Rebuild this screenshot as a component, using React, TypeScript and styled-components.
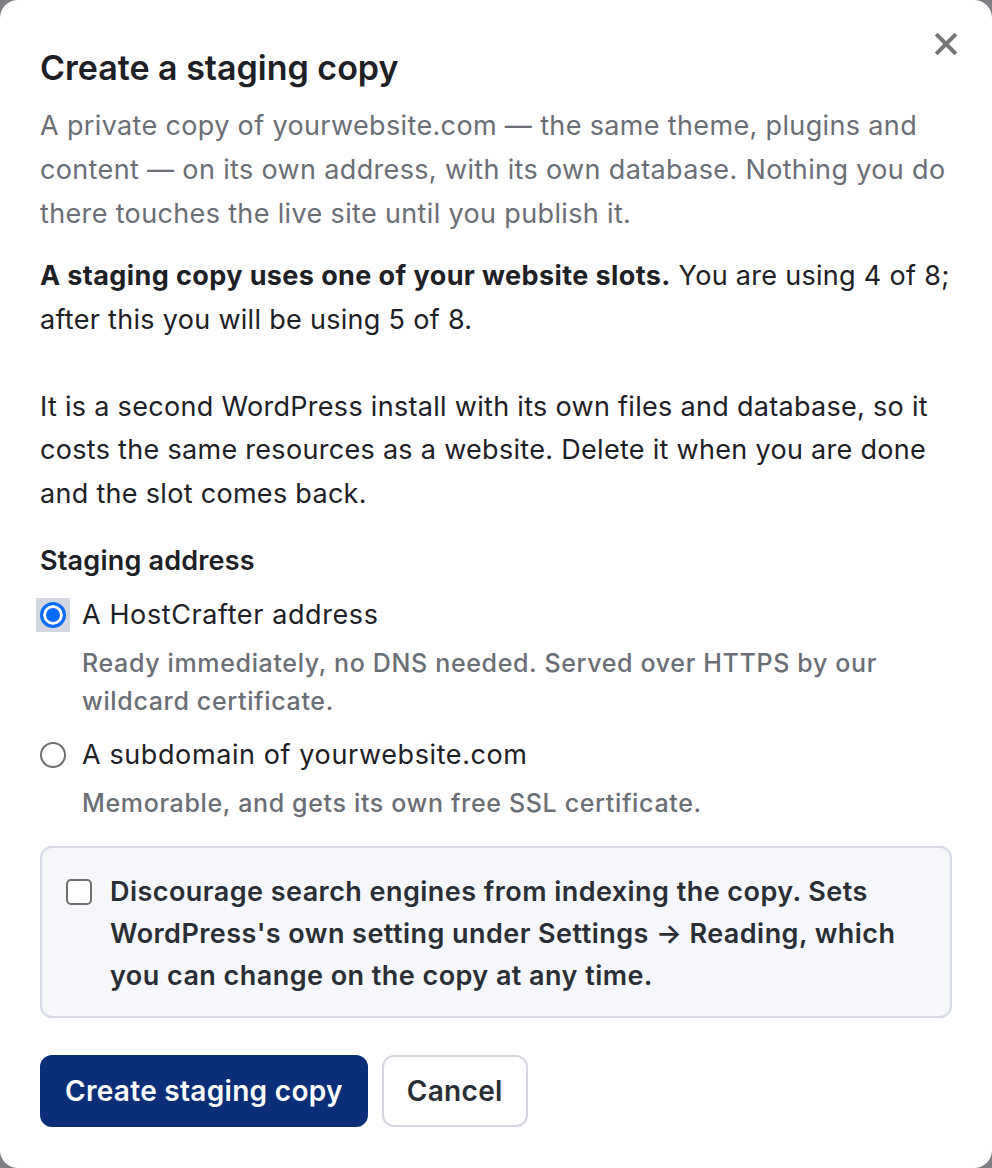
import React, { useState } from "react";
import styled, { createGlobalStyle } from "styled-components";

const Global = createGlobalStyle`
  html, body { margin: 0; padding: 0; background: #7f8084; }
  body { font-family: Inter, "Noto Sans", "Liberation Sans", sans-serif; -webkit-font-smoothing: antialiased; }
  * { box-sizing: border-box; }
`;

const Dialog = styled.div`
  position: relative;
  width: 992px;
  min-height: 1168px;
  background: #ffffff;
  border-radius: 18px;
  padding: 44px 40px 40px 40px;
  display: flex;
  flex-direction: column;
  color: #1d2025;
`;

const CloseButton = styled.button`
  position: absolute;
  top: 28px;
  right: 30px;
  width: 32px;
  height: 32px;
  border: none;
  background: transparent;
  padding: 0;
  display: flex;
  align-items: center;
  justify-content: center;
  cursor: pointer;
`;

const Title = styled.h2`
  margin: 0 0 12px 0;
  font-size: 34px;
  line-height: 48px;
  font-weight: 600;
  color: #1d2025;
  letter-spacing: 0;
`;

const Lead = styled.p`
  margin: 0;
  font-size: 27px;
  line-height: 44px;
  letter-spacing: 0.35px;
  color: #6a6e75;
`;

const Body = styled.p`
  margin: 18px 0 0 0;
  font-size: 27px;
  line-height: 43.5px;
  letter-spacing: 0.3px;
  color: #1d2025;
  strong { font-weight: 700; letter-spacing: 0.4px; }
`;

const Fieldset = styled.fieldset`
  border: none;
  margin: 24px 0 0 0;
  padding: 0;
  display: flex;
  flex-direction: column;
`;

const Legend = styled.legend`
  padding: 0;
  font-size: 27px;
  line-height: 44px;
  font-weight: 600;
  letter-spacing: 0.2px;
  color: #1d2025;
`;

const Option = styled.label<{ first?: boolean }>`
  display: grid;
  grid-template-columns: 42px 1fr;
  margin-top: ${(p) => (p.first ? "12px" : "15px")};
  cursor: pointer;
`;

const RadioWrap = styled.span<{ focused?: boolean }>`
  width: 34px;
  height: 34px;
  margin-left: -4px;
  display: flex;
  align-items: center;
  justify-content: center;
  background: ${(p) => (p.focused ? "#d3d7df" : "transparent")};
  align-self: start;
  margin-top: 3px;
`;

const RadioDot = styled.span<{ checked?: boolean }>`
  width: 26px;
  height: 26px;
  border-radius: 50%;
  border: ${(p) => (p.checked ? "3px solid #0a6cff" : "2px solid #6f6f6f")};
  background: ${(p) => (p.checked ? "#0a6cff" : "#fff")};
  box-shadow: ${(p) => (p.checked ? "inset 0 0 0 3px #fff" : "none")};
`;

const OptionLabel = styled.span`
  font-size: 27px;
  line-height: 40px;
  letter-spacing: 0.6px;
  color: #1d2025;
`;

const OptionHint = styled.span`
  grid-column: 2;
  margin-top: 9px;
  font-size: 25px;
  line-height: 38px;
  font-weight: 500;
  letter-spacing: 0.65px;
  color: #6a6e75;
`;

const Notice = styled.label`
  margin-top: 24px;
  background: #f5f7fa;
  border: 2px solid #d6dbe6;
  border-radius: 12px;
  padding: 23px 24px 19px 24px;
  display: grid;
  grid-template-columns: 44px 1fr;
  cursor: pointer;
`;

const CheckBox = styled.span`
  width: 26px;
  height: 26px;
  border: 2px solid #6f6f6f;
  border-radius: 5px;
  background: #fff;
  margin-top: 8px;
`;

const NoticeText = styled.span`
  font-size: 27px;
  line-height: 42px;
  font-weight: 600;
  letter-spacing: 0.45px;
  color: #2a2e35;
`;

const Actions = styled.div`
  margin-top: 37px;
  display: flex;
  gap: 14px;
`;

const Button = styled.button<{ primary?: boolean }>`
  height: 72px;
  padding: 0 23px;
  border-radius: 12px;
  font-family: inherit;
  font-size: 28px;
  font-weight: 600;
  letter-spacing: 0.3px;
  cursor: pointer;
  background: ${(p) => (p.primary ? "#0a2f78" : "#ffffff")};
  color: ${(p) => (p.primary ? "#ffffff" : "#2a2e35")};
  border: 2px solid ${(p) => (p.primary ? "#0a2f78" : "#d3d7df")};
`;

export default function App() {
  const [choice, setChoice] = useState<"host" | "sub">("host");
  const [discourage, setDiscourage] = useState(false);
  return (
    <>
      <Global />
      <Dialog role="dialog" aria-labelledby="staging-title">
        <CloseButton aria-label="Close">
          <svg width="22" height="22" viewBox="0 0 22 22">
            <path d="M2.5 2.5 L19.5 19.5 M19.5 2.5 L2.5 19.5" stroke="#777" strokeWidth="4" strokeLinecap="square" />
          </svg>
        </CloseButton>
        <Title id="staging-title">Create a staging copy</Title>
        <Lead>
          A private copy of yourwebsite.com — the same theme, plugins and content — on its own address, with its own
          database. Nothing you do there touches the live site until you publish it.
        </Lead>
        <Body>
          <strong>A staging copy uses one of your website slots.</strong> You are using 4 of 8; after this you will be
          using 5 of 8.
          <br />
          <br />
          It is a second WordPress install with its own files and database, so it costs the same resources as a
          website. Delete it when you are done and the slot comes back.
        </Body>
        <Fieldset>
          <Legend>Staging address</Legend>
          <Option first onClick={() => setChoice("host")}>
            <RadioWrap focused={choice === "host"}>
              <RadioDot checked={choice === "host"} />
            </RadioWrap>
            <OptionLabel>A HostCrafter address</OptionLabel>
            <OptionHint>Ready immediately, no DNS needed. Served over HTTPS by our wildcard certificate.</OptionHint>
          </Option>
          <Option onClick={() => setChoice("sub")}>
            <RadioWrap focused={choice === "sub"}>
              <RadioDot checked={choice === "sub"} />
            </RadioWrap>
            <OptionLabel>A subdomain of yourwebsite.com</OptionLabel>
            <OptionHint>Memorable, and gets its own free SSL certificate.</OptionHint>
          </Option>
        </Fieldset>
        <Notice onClick={() => setDiscourage(!discourage)}>
          <CheckBox />
          <NoticeText>
            Discourage search engines from indexing the copy. Sets WordPress's own setting under Settings → Reading,
            which you can change on the copy at any time.
          </NoticeText>
        </Notice>
        <Actions>
          <Button primary>Create staging copy</Button>
          <Button>Cancel</Button>
        </Actions>
      </Dialog>
    </>
  );
}
